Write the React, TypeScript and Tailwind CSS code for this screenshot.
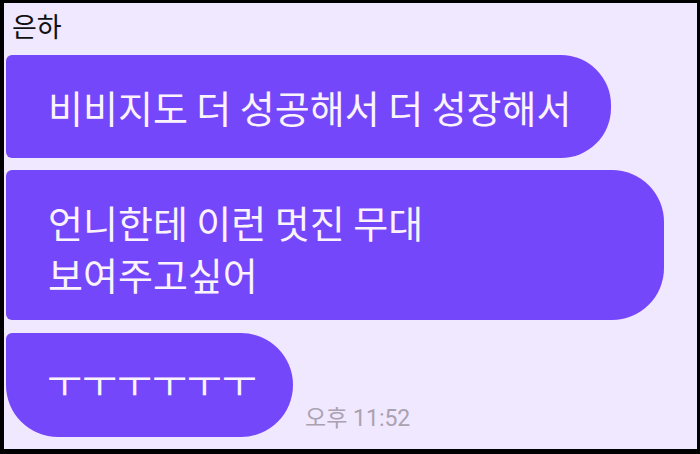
export default function App() {
  const font = { fontFamily: '"Noto Sans CJK KR", "Noto Sans", sans-serif' };
  return (
    <div className="w-[700px] h-[454px] bg-black pl-[4px] pt-[3px] pr-[3px] pb-[5px]" style={font}>
      <div className="w-full h-full bg-[#f0e8ff] flex flex-col pl-[2px]">
        {/* 보낸 사람 */}
        <div className="h-[52px] pl-[6px] pt-[5px] text-[27px] leading-[36px] text-[#111]">은하</div>

        <div className="flex flex-col gap-[12px]">
          <div className="w-[605px] h-[103px] bg-[#7547fb] rounded-tl-[6px] rounded-bl-[6px] rounded-r-[50px] flex items-center pl-[42px]">
            <p className="text-[38px] leading-none text-[#fbf3fb] whitespace-nowrap">비비지도 더 성공해서 더 성장해서</p>
          </div>

          <div className="w-[658px] h-[150px] bg-[#7547fb] rounded-tl-[6px] rounded-bl-[6px] rounded-r-[52px] flex items-center pl-[42px] pt-[5px]">
            <p className="text-[38px] leading-[52px] text-[#fbf3fb]">
              언니한테 이런 멋진 무대
              <br />
              보여주고싶어
            </p>
          </div>

          <div className="flex items-end gap-[12px] mt-[1px]">
            <div className="w-[287px] h-[104px] bg-[#7547fb] rounded-tl-[6px] rounded-bl-[52px] rounded-r-[52px] flex items-center pl-[41px] pb-[8px]">
              <p className="text-[38px] leading-none text-[#fbf3fb] whitespace-nowrap">ㅜㅜㅜㅜㅜㅜ</p>
            </div>
            <span
              className="text-[23px] leading-none text-[#aaa2b0] mb-[7px] whitespace-nowrap"
              style={{ fontFamily: 'Roboto, "Noto Sans CJK KR", sans-serif' }}
            >
              오후 11:52
            </span>
          </div>
        </div>
      </div>
    </div>
  );
}
